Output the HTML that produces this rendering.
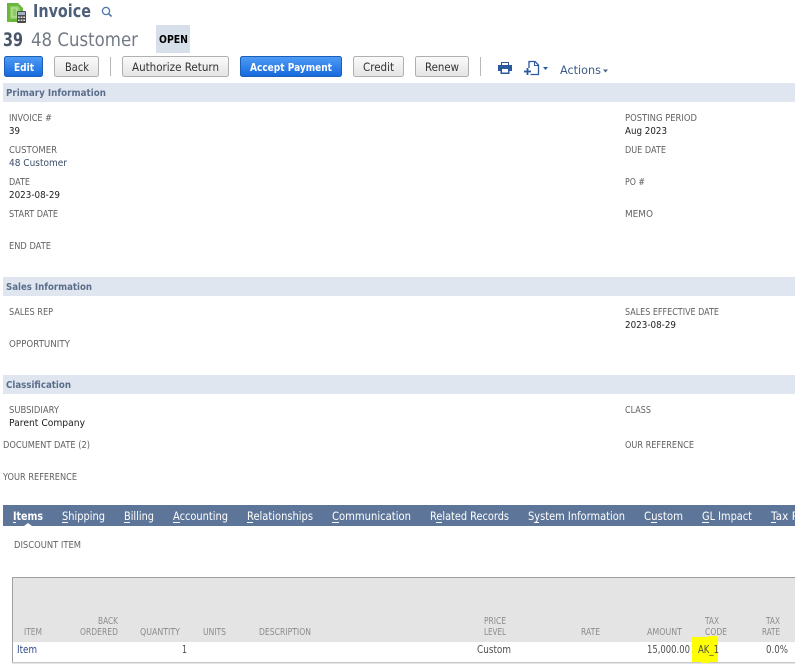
<!DOCTYPE html>
<html lang="en"><head><meta charset="utf-8"><title>Invoice</title>
<style>
html,body{margin:0;padding:0;background:#fff;width:795px;height:666px;overflow:hidden}
svg{display:block}
text{font-family:"DejaVu Sans","Liberation Sans",sans-serif;white-space:pre}
.l{font-size:10px;fill:#626262}
.v{font-size:10px;fill:#1c1c1c}
.s{font-size:9.5px;font-weight:bold;fill:#5a6e8c}
.b{font-size:11.5px;fill:#333}
.w{font-size:11px;fill:#fff}
.t{font-size:11.5px;fill:#fff}
.h{font-size:9.5px;fill:#8c8c8c}
.r{font-size:10.5px;fill:#4f4f4f}
</style></head><body>
<svg width="795" height="666" viewBox="0 0 795 666" xmlns="http://www.w3.org/2000/svg">
<defs>
<linearGradient id="bl" x1="0" y1="0" x2="0" y2="1"><stop offset="0" stop-color="#4f9df6"/><stop offset="1" stop-color="#1568dc"/></linearGradient>
<linearGradient id="gr" x1="0" y1="0" x2="0" y2="1"><stop offset="0" stop-color="#fbfbfb"/><stop offset="1" stop-color="#e4e4e4"/></linearGradient>
</defs>
<rect width="795" height="666" fill="#fff"/>

<!-- page icon -->
<path d="M7 3h11l5 5v14H7z" fill="#69b83c"/>
<path d="M10 6h8l2 2v11H10z" fill="#8ccb62"/>
<path d="M12 8h5v9h-5z" fill="none" stroke="#c5e6ac" stroke-width="1"/>
<rect x="17" y="11" width="9" height="12" rx="1" fill="#4a4a4a"/>
<rect x="18" y="12" width="7" height="3" fill="#9fb0c0"/>
<path d="M18 16.500h1.700v1.500H18zM20.700 16.500h1.700v1.500h-1.700zM23.300 16.500H25v1.500h-1.700zM18 19.500h1.700V21H18zM20.700 19.500h1.700V21h-1.700zM23.300 19.500H25V21h-1.700z" fill="#e0e0e0"/>

<text x="33" y="17" font-size="17.500" font-weight="bold" fill="#4d5f79" textLength="58" lengthAdjust="spacingAndGlyphs">Invoice</text>
<circle cx="106" cy="11" r="3.600" fill="none" stroke="#4a78ad" stroke-width="1.300"/>
<path d="M108.700 13.700L111.500 16.500" stroke="#4a78ad" stroke-width="1.600"/>

<text x="3" y="46" font-size="18.500" font-weight="bold" fill="#4a5568" textLength="20" lengthAdjust="spacingAndGlyphs">39</text>
<text x="31" y="46" font-size="18.500" fill="#727a85" textLength="107" lengthAdjust="spacingAndGlyphs">48 Customer</text>
<rect x="156" y="25" width="34" height="28" fill="#d6dfea"/>
<text x="159" y="43" font-size="11" font-weight="bold" fill="#000" textLength="29" lengthAdjust="spacingAndGlyphs">OPEN</text>

<!-- buttons -->
<rect x="4.500" y="56.500" width="38" height="20" rx="2" fill="url(#bl)" stroke="#1a5fb8"/>
<text class="w" x="14" y="71" font-weight="bold" textLength="20" lengthAdjust="spacingAndGlyphs">Edit</text>
<rect x="54.500" y="56.500" width="44" height="20" rx="2" fill="url(#gr)" stroke="#b0b0b0"/>
<text class="b" x="65" y="71" textLength="24" lengthAdjust="spacingAndGlyphs">Back</text>
<rect x="110" y="57" width="1" height="19" fill="#b8b8b8"/>
<rect x="122.500" y="56.500" width="106" height="20" rx="2" fill="url(#gr)" stroke="#b0b0b0"/>
<text class="b" x="132" y="71" textLength="87" lengthAdjust="spacingAndGlyphs">Authorize Return</text>
<rect x="240.500" y="56.500" width="101" height="20" rx="2" fill="url(#bl)" stroke="#1a5fb8"/>
<text class="w" x="250" y="71" font-weight="bold" textLength="82" lengthAdjust="spacingAndGlyphs">Accept Payment</text>
<rect x="353.500" y="56.500" width="50" height="20" rx="2" fill="url(#gr)" stroke="#b0b0b0"/>
<text class="b" x="363" y="71" textLength="31" lengthAdjust="spacingAndGlyphs">Credit</text>
<rect x="415.500" y="56.500" width="53" height="20" rx="2" fill="url(#gr)" stroke="#b0b0b0"/>
<text class="b" x="425" y="71" textLength="34" lengthAdjust="spacingAndGlyphs">Renew</text>
<rect x="480" y="57" width="1" height="19" fill="#b8b8b8"/>

<!-- print icon -->
<path d="M501 62h8v3h3v6h-2.500v3h-9v-3H498v-6h3z" fill="#2a5a9c"/>
<rect x="502" y="69" width="6" height="3.500" fill="#fff"/>
<rect x="502" y="63" width="6" height="2" fill="#fff"/>
<!-- new icon -->
<path d="M529 68v-6.500h6l3.500 3.500v9.500h-8" fill="none" stroke="#2a5a9c" stroke-width="1.300"/>
<path d="M534.500 61.500v4h4" fill="none" stroke="#2a5a9c" stroke-width="1"/>
<path d="M524 71.500h7M527.500 68v7" stroke="#2a5a9c" stroke-width="1.800"/>
<path d="M543 67h5l-2.500 3z" fill="#2a5a9c"/>
<text x="560" y="74" font-size="11.500" fill="#3c5a85" textLength="41" lengthAdjust="spacingAndGlyphs">Actions</text>
<path d="M603 69.500h5l-2.500 3z" fill="#4a6285"/>

<!-- section bars -->
<rect x="3" y="83" width="792" height="19" fill="#e0e6ef"/>
<text class="s" x="6" y="96" textLength="100" lengthAdjust="spacingAndGlyphs">Primary Information</text>
<rect x="3" y="277" width="792" height="19" fill="#e0e6ef"/>
<text class="s" x="6" y="290" textLength="86" lengthAdjust="spacingAndGlyphs">Sales Information</text>
<rect x="3" y="375" width="792" height="19" fill="#e0e6ef"/>
<text class="s" x="6" y="388" textLength="65" lengthAdjust="spacingAndGlyphs">Classification</text>

<!-- fields left -->
<text class="l" x="9" y="121" textLength="43" lengthAdjust="spacingAndGlyphs">INVOICE #</text>
<text class="v" x="9" y="134" textLength="11" lengthAdjust="spacingAndGlyphs">39</text>
<text class="l" x="9" y="153" textLength="48" lengthAdjust="spacingAndGlyphs">CUSTOMER</text>
<text class="v" x="9" y="166" style="fill:#3a4c68" textLength="58" lengthAdjust="spacingAndGlyphs">48 Customer</text>
<text class="l" x="9" y="185" textLength="21" lengthAdjust="spacingAndGlyphs">DATE</text>
<text class="v" x="9" y="198" textLength="51" lengthAdjust="spacingAndGlyphs">2023-08-29</text>
<text class="l" x="9" y="217" textLength="49" lengthAdjust="spacingAndGlyphs">START DATE</text>
<text class="l" x="9" y="249" textLength="42" lengthAdjust="spacingAndGlyphs">END DATE</text>

<!-- fields right -->
<text class="l" x="625" y="121" textLength="72" lengthAdjust="spacingAndGlyphs">POSTING PERIOD</text>
<text class="v" x="625" y="134" textLength="42" lengthAdjust="spacingAndGlyphs">Aug 2023</text>
<text class="l" x="625" y="153" textLength="41" lengthAdjust="spacingAndGlyphs">DUE DATE</text>
<text class="l" x="625" y="185" textLength="20" lengthAdjust="spacingAndGlyphs">PO #</text>
<text class="l" x="625" y="217" textLength="28" lengthAdjust="spacingAndGlyphs">MEMO</text>

<text class="l" x="9" y="315" textLength="44" lengthAdjust="spacingAndGlyphs">SALES REP</text>
<text class="l" x="9" y="347" textLength="61" lengthAdjust="spacingAndGlyphs">OPPORTUNITY</text>
<text class="l" x="625" y="315" textLength="94" lengthAdjust="spacingAndGlyphs">SALES EFFECTIVE DATE</text>
<text class="v" x="625" y="328" textLength="51" lengthAdjust="spacingAndGlyphs">2023-08-29</text>

<text class="l" x="9" y="413" textLength="50" lengthAdjust="spacingAndGlyphs">SUBSIDIARY</text>
<text class="v" x="9" y="426" textLength="76" lengthAdjust="spacingAndGlyphs">Parent Company</text>
<text class="l" x="3" y="448" textLength="87" lengthAdjust="spacingAndGlyphs">DOCUMENT DATE (2)</text>
<text class="l" x="3" y="480" textLength="74" lengthAdjust="spacingAndGlyphs">YOUR REFERENCE</text>
<text class="l" x="625" y="413" textLength="26" lengthAdjust="spacingAndGlyphs">CLASS</text>
<text class="l" x="625" y="448" textLength="69" lengthAdjust="spacingAndGlyphs">OUR REFERENCE</text>

<!-- tabs -->
<rect x="3" y="505" width="792" height="21" fill="#5d7598"/>
<text class="t" x="13" y="520" font-weight="bold" textLength="30" lengthAdjust="spacingAndGlyphs">Items</text>
<text class="t" x="62" y="520" textLength="43" lengthAdjust="spacingAndGlyphs">Shipping</text>
<text class="t" x="124" y="520" textLength="30" lengthAdjust="spacingAndGlyphs">Billing</text>
<text class="t" x="173" y="520" textLength="55" lengthAdjust="spacingAndGlyphs">Accounting</text>
<text class="t" x="247" y="520" textLength="66" lengthAdjust="spacingAndGlyphs">Relationships</text>
<text class="t" x="332" y="520" textLength="79" lengthAdjust="spacingAndGlyphs">Communication</text>
<text class="t" x="430" y="520" textLength="79" lengthAdjust="spacingAndGlyphs">Related Records</text>
<text class="t" x="528" y="520" textLength="97" lengthAdjust="spacingAndGlyphs">System Information</text>
<text class="t" x="644" y="520" textLength="39" lengthAdjust="spacingAndGlyphs">Custom</text>
<text class="t" x="702" y="520" textLength="50" lengthAdjust="spacingAndGlyphs">GL Impact</text>
<text class="t" x="771" y="520" textLength="28" lengthAdjust="spacingAndGlyphs">Tax R</text>
<g fill="#fff">
<rect x="13" y="522" width="3" height="1"/><rect x="62" y="522" width="6" height="1"/><rect x="124" y="522" width="6" height="1"/>
<rect x="173" y="522" width="7" height="1"/><rect x="247" y="522" width="6" height="1"/><rect x="332" y="522" width="7" height="1"/>
<rect x="436" y="522" width="6" height="1"/><rect x="534" y="522" width="5" height="1"/><rect x="651" y="522" width="6" height="1"/>
<rect x="702" y="522" width="7" height="1"/><rect x="771" y="522" width="5" height="1"/>
<path d="M24 526l4-3 4 3z"/>
</g>

<text class="l" x="14" y="548" textLength="67" lengthAdjust="spacingAndGlyphs">DISCOUNT ITEM</text>

<!-- table -->
<rect x="12" y="577" width="783" height="65" fill="#e4e4e4"/>
<rect x="12" y="577" width="783" height="1" fill="#a0a0a0"/>
<rect x="12" y="577" width="1" height="86" fill="#a0a0a0"/>
<rect x="12" y="662" width="783" height="1.500" fill="#c8c8c8"/>

<text class="h" x="24" y="635" textLength="18" lengthAdjust="spacingAndGlyphs">ITEM</text>
<text class="h" x="98" y="624" textLength="20" lengthAdjust="spacingAndGlyphs">BACK</text>
<text class="h" x="80" y="635" textLength="38" lengthAdjust="spacingAndGlyphs">ORDERED</text>
<text class="h" x="140" y="635" textLength="40" lengthAdjust="spacingAndGlyphs">QUANTITY</text>
<text class="h" x="203" y="635" textLength="23" lengthAdjust="spacingAndGlyphs">UNITS</text>
<text class="h" x="259" y="635" textLength="52" lengthAdjust="spacingAndGlyphs">DESCRIPTION</text>
<text class="h" x="484" y="624" textLength="22" lengthAdjust="spacingAndGlyphs">PRICE</text>
<text class="h" x="484" y="635" textLength="22" lengthAdjust="spacingAndGlyphs">LEVEL</text>
<text class="h" x="581" y="635" textLength="19" lengthAdjust="spacingAndGlyphs">RATE</text>
<text class="h" x="647" y="635" textLength="35" lengthAdjust="spacingAndGlyphs">AMOUNT</text>
<text class="h" x="705" y="624" textLength="14" lengthAdjust="spacingAndGlyphs">TAX</text>
<text class="h" x="705" y="635" textLength="22" lengthAdjust="spacingAndGlyphs">CODE</text>
<text class="h" x="766" y="624" textLength="14" lengthAdjust="spacingAndGlyphs">TAX</text>
<text class="h" x="762" y="635" textLength="18" lengthAdjust="spacingAndGlyphs">RATE</text>

<path d="M692 637h16v-1h10v26h-8v1h-8v-1h-10z" fill="#ffff00"/>
<text class="r" x="17" y="653" style="fill:#2f4a85" textLength="20" lengthAdjust="spacingAndGlyphs">Item</text>
<text class="r" x="182" y="653" textLength="5" lengthAdjust="spacingAndGlyphs">1</text>
<text class="r" x="477" y="653" textLength="34" lengthAdjust="spacingAndGlyphs">Custom</text>
<text class="r" x="647" y="653" textLength="43" lengthAdjust="spacingAndGlyphs">15,000.00</text>
<text class="r" x="698" y="653" textLength="21" lengthAdjust="spacingAndGlyphs">AK_1</text>
<text class="r" x="766" y="653" textLength="22" lengthAdjust="spacingAndGlyphs">0.0%</text>
</svg>
</body></html>
